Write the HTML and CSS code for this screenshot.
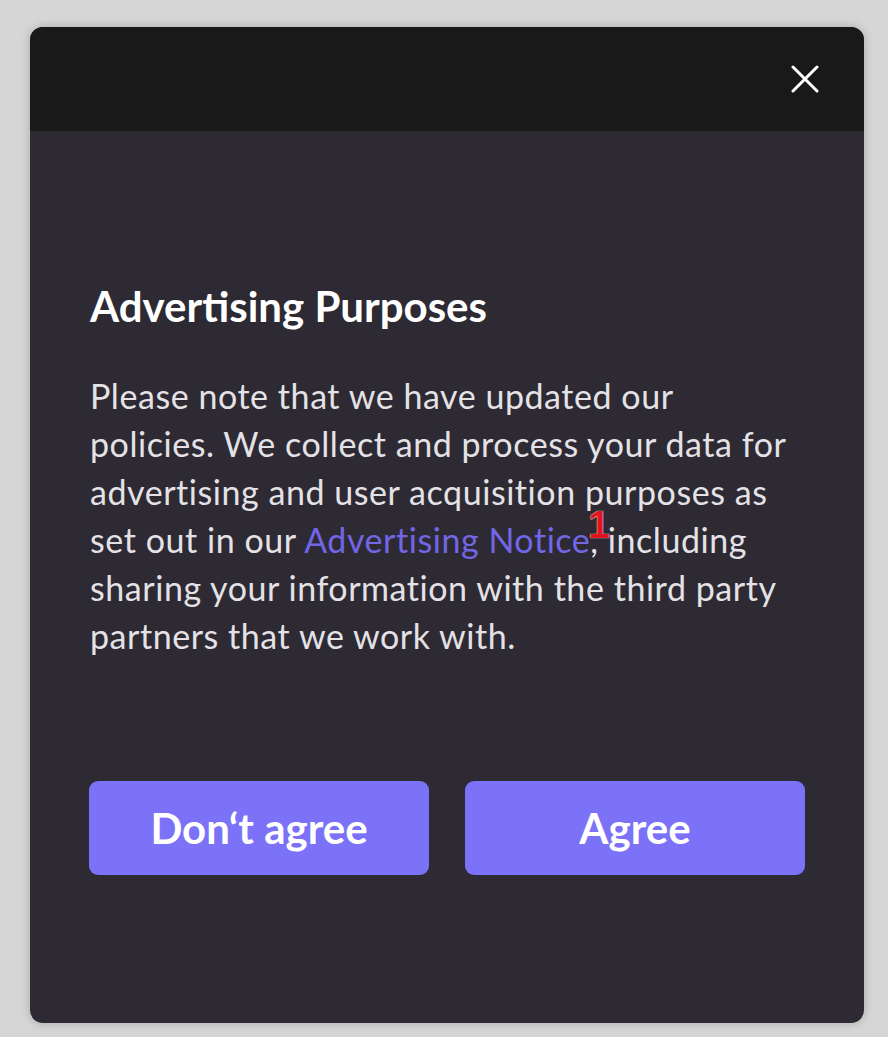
FILE: index.html
```html
<!DOCTYPE html>
<html lang="en">
<head>
<meta charset="utf-8">
<title>Advertising Purposes</title>
<link rel="stylesheet" href="styles.css">
</head>
<body>
<div class="card">
  <div class="card-header">
    <button class="close" aria-label="Close">
      <svg width="28" height="28" viewBox="0 0 28 28"><path d="M2 2L26 26M26 2L2 26" stroke="#ffffff" stroke-width="3" stroke-linecap="round"/></svg>
    </button>
  </div>
  <div class="card-body">
    <h1 class="title">Advertising Purposes</h1>
    <p class="text">Please note that we have updated our policies. We collect and process your data for advertising and user acquisition purposes as set out in our <a class="link" href="#">Advertising Notice</a><span class="marker-wrap"><span class="marker">1</span></span>, including sharing your information with the third party partners that we work with.</p>
    <div class="actions">
      <button class="btn">Don‘t agree</button>
      <button class="btn">Agree</button>
    </div>
  </div>
</div>
</body>
</html>
```
FILE: styles.css
```css
html, body {
  margin: 0;
  padding: 0;
}
body {
  background: #d6d6d6;
  font-family: Lato, "Liberation Sans", sans-serif;
  padding: 27px 24px 14px 30px;
}
.card {
  width: 834px;
  height: 996px;
  border-radius: 13px;
  overflow: hidden;
  background: #2d2a33;
  box-shadow: 0 0 10px rgba(0,0,0,0.22);
  display: flex;
  flex-direction: column;
}
.card-header {
  height: 104px;
  background: #191919;
  display: flex;
  justify-content: flex-end;
  align-items: center;
  padding-right: 45px;
}
.close {
  background: none;
  border: 0;
  padding: 0;
  width: 28px;
  height: 28px;
  display: block;
  cursor: pointer;
}
.close svg { display: block; }
.card-body {
  flex: 1;
  padding: 151px 59px 0 59px;
}
.title {
  margin: 0 0 42px 1px;
  font-size: 42px;
  line-height: 48px;
  font-weight: 700;
  color: #ffffff;
}
.text {
  margin: 0 0 0 1px;
  max-width: 706px;
  font-size: 34px;
  line-height: 48px;
  letter-spacing: 0.55px;
  color: #e4e2e6;
}
.link {
  color: #7266e6;
  text-decoration: none;
}
.marker-wrap {
  position: relative;
}
.marker {
  position: absolute;
  left: -2px;
  top: -14px;
  color: #e3141f;
  font-family: "Liberation Sans", Arial, sans-serif;
  font-weight: 700;
  font-size: 39px;
  line-height: 39px;
  letter-spacing: 0;
  text-shadow: 0 0 1px #ffffff, 0 0 1px #ffffff;
}
.actions {
  margin-top: 121px;
  display: flex;
  gap: 36px;
}
.btn {
  width: 340px;
  height: 94px;
  border: 0;
  border-radius: 9px;
  background: #7b72f8;
  color: #ffffff;
  font-family: Lato, "Liberation Sans", sans-serif;
  font-weight: 700;
  font-size: 42px;
  cursor: pointer;
}
```
